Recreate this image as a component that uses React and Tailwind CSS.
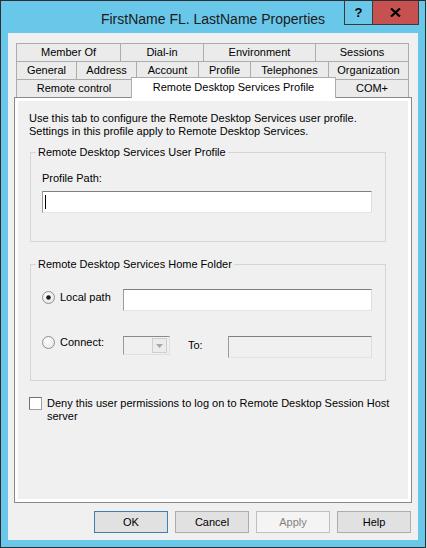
import React from "react";

const row1 = [
  ["Member Of", "w-[105px]"],
  ["Dial-in", "w-[84px]"],
  ["Environment", "w-[113px]"],
  ["Sessions", "w-[94px]"],
];

const row2 = [
  ["General", "w-[61px]"],
  ["Address", "w-[61px]"],
  ["Account", "w-[63px]"],
  ["Profile", "w-[53px]"],
  ["Telephones", "w-[79px]"],
  ["Organization", "w-[81px]"],
];

function Tab({ label, w, first }) {
  return (
    <div
      className={`flex h-[19px] items-center justify-center border border-[#acacac] bg-[#ebebeb] ${w} ${first ? "" : "-ml-px"}`}
    >
      {label}
    </div>
  );
}

function Radio({ checked }) {
  return (
    <svg width="13" height="13" viewBox="0 0 13 13" className="shrink-0">
      <defs>
        <radialGradient id="rg" cx="0.4" cy="0.35" r="0.7">
          <stop offset="0" stopColor="#ffffff" />
          <stop offset="1" stopColor="#e6e6e6" />
        </radialGradient>
      </defs>
      <circle cx="6.5" cy="6.5" r="6" fill="url(#rg)" stroke="#8f8f8f" strokeWidth="1" />
      {checked && <circle cx="6.5" cy="6.5" r="2.3" fill="#1c1c1c" />}
    </svg>
  );
}

function TextBox({ w, disabled, cursor }) {
  return (
    <div
      className={`flex h-[22px] items-center border border-t-[#7f7f7f] border-l-[#9a9a9a] border-r-[#dedede] border-b-[#e3e3e3] ${w} ${disabled ? "bg-[#f0f0f0]" : "bg-white"}`}
    >
      {cursor && <div className="ml-[2px] h-[14px] w-px bg-black" />}
    </div>
  );
}

function Btn({ children, primary, disabled }) {
  let cls = "border-[#adadad] bg-[#e1e1e1] text-black";
  if (primary) cls = "border-[#3c7fb1] bg-[#e1e1e1] text-black";
  if (disabled) cls = "border-[#bfbfbf] bg-[#f4f4f4] text-[#838383]";
  return (
    <div className={`flex h-[22px] w-[74px] items-center justify-center border ${cls}`}>
      {children}
    </div>
  );
}

export default function App() {
  return (
    <div className="flex h-[548px] w-[427px] bg-[#e8e8e8] font-['Liberation_Sans',Arial,sans-serif] text-[11px] leading-[13px] text-black">
      {/* window */}
      <div className="flex h-[548px] w-[426px] flex-col border border-[#2e2e30] bg-[#69c7e9]">
        {/* title bar */}
        <div className="relative h-[32px] shrink-0 pt-[10px] text-center text-[14px] leading-[17px] text-[#1b1b1b]">
          FirstName FL. LastName Properties
          <div className="absolute right-[6px] top-0 flex h-[24px] w-[75px] border-x border-b border-[#3a3a3a]">
            <div className="flex w-[28px] items-center justify-center border-r border-[#3a3a3a] pb-[1px] text-[13px] font-bold text-black">
              ?
            </div>
            <div className="flex flex-1 items-center justify-center bg-[#c75050]">
              <svg width="11" height="9" viewBox="0 0 11 9">
                <path d="M1 0.5 L10 8.5 M10 0.5 L1 8.5" stroke="#000" strokeWidth="2.2" />
              </svg>
            </div>
          </div>
        </div>

        {/* client area */}
        <div className="mx-[7px] flex h-[507px] flex-col bg-[#f0f0f0] pt-[10px]">
          {/* tab strip */}
          <div className="ml-[8px] flex flex-col">
            <div className="flex">
              {row1.map(([l, w], i) => (
                <Tab key={l} label={l} w={w} first={i === 0} />
              ))}
            </div>
            <div className="-mt-px flex">
              {row2.map(([l, w], i) => (
                <Tab key={l} label={l} w={w} first={i === 0} />
              ))}
            </div>
            <div className="-mt-[3px] flex h-[21px] items-end">
              <Tab label="Remote control" w="w-[116px]" first />
              <div className="relative z-10 -ml-px flex h-[21px] w-[205px] justify-center self-start border border-b-0 border-[#acacac] bg-white pt-[3px]">
                Remote Desktop Services Profile
              </div>
              <Tab label="COM+" w="w-[74px]" />
            </div>
          </div>

          {/* tab page */}
          <div className="-mt-px ml-[6px] h-[406px] w-[398px] shrink-0 border border-[#898989] bg-white p-[3px]">
            <div className="flex h-full flex-col bg-[#f0f0f0] pt-[11px]">
              <p className="ml-[11px]">
                Use this tab to configure the Remote Desktop Services user profile.
                <br />
                Settings in this profile apply to Remote Desktop Services.
              </p>

              <fieldset className="ml-[12px] mt-[8px] w-[356px] border border-[#d5d5d5] pb-[28px] pl-[11px]">
                <legend className="ml-[-6px] px-[2px]">Remote Desktop Services User Profile</legend>
                <div className="mt-[13px]">Profile Path:</div>
                <div className="mt-[6px]">
                  <TextBox w="w-[330px]" cursor />
                </div>
              </fieldset>

              <fieldset className="ml-[12px] mt-[16px] w-[356px] border border-[#d5d5d5] pb-[22px] pl-[11px]">
                <legend className="ml-[-6px] px-[2px]">Remote Desktop Services Home Folder</legend>
                <div className="mt-[18px] flex items-start">
                  <div className="mt-[2px]">
                    <Radio checked />
                  </div>
                  <div className="ml-[5px] mt-[2px] w-[63px]">Local path</div>
                  <TextBox w="w-[249px]" />
                </div>
                <div className="mt-[25px] flex items-start">
                  <Radio />
                  <div className="ml-[5px] w-[63px]">Connect:</div>
                  <div className="flex h-[19px] w-[47px] border border-t-[#8a8a8a] border-l-[#9a9a9a] border-r-[#e0e0e0] border-b-[#e0e0e0] bg-[#f0f0f0] pl-[28px]">
                    <div className="my-px flex w-[15px] items-center justify-center border border-[#cfcfcf] bg-[#ececec]">
                      <svg width="7" height="4" viewBox="0 0 7 4">
                        <path d="M0 0 H7 L3.5 4 Z" fill="#a8a8a8" />
                      </svg>
                    </div>
                  </div>
                  <div className="ml-[18px] mt-[3px] w-[40px]">To:</div>
                  <TextBox w="w-[144px]" disabled />
                </div>
              </fieldset>

              <div className="ml-[11px] mt-[16px] flex items-start">
                <div className="h-[13px] w-[13px] shrink-0 border border-t-[#707070] border-l-[#707070] border-r-[#a0a0a0] border-b-[#a0a0a0] bg-white" />
                <div className="ml-[5px] whitespace-nowrap">
                  Deny this user permissions to log on to Remote Desktop Session Host
                  <br />
                  server
                </div>
              </div>
            </div>
          </div>

          {/* buttons */}
          <div className="mt-[8px] flex justify-end gap-[7px] pr-[7px]">
            <Btn primary>OK</Btn>
            <Btn>Cancel</Btn>
            <Btn disabled>Apply</Btn>
            <Btn>Help</Btn>
          </div>
        </div>
      </div>
      <div className="h-[548px] w-px bg-[#dadada]" />
    </div>
  );
}
